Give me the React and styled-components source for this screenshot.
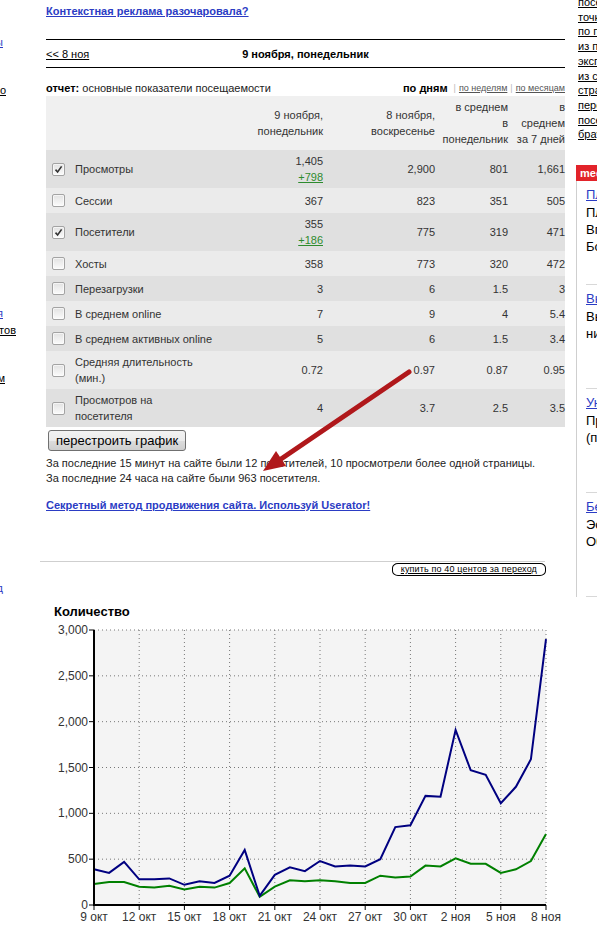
import React from "react";
import styled, { createGlobalStyle } from "styled-components";

const GlobalStyle = createGlobalStyle`
  html, body {
    margin: 0;
    padding: 0;
    background: #fff;
    overflow: hidden;
  }
  body {
    font-family: "Liberation Sans", Arial, sans-serif;
    font-size: 11px;
    color: #000;
  }
`;

const Page = styled.div`
  position: relative;
  width: 597px;
  height: 930px;
  overflow: hidden;
  display: flex;
  align-items: flex-start;
`;

/* left rail: only the tail of each link is visible */
const LeftRail = styled.div`
  flex: 0 0 20px;
  width: 20px;
  min-width: 0;
  overflow: hidden;
  margin-right: 26px;
  display: flex;
  flex-direction: column;
`;

const RailLink = styled.a`
  display: flex;
  justify-content: flex-end;
  overflow: hidden;
  white-space: nowrap;
  height: 14px;
  line-height: 14px;
  margin-top: ${p => p.$top}px;
  padding-right: ${p => p.$cut}px;
  color: ${p => (p.$blue ? "#2b3cc4" : "#000")};
  text-decoration: underline;
`;

const Main = styled.div`
  flex: 0 0 519px;
  width: 519px;
  min-width: 0;
  display: flex;
  flex-direction: column;
`;

const PromoLink = styled.a`
  align-self: flex-start;
  margin-top: ${p => p.$top}px;
  font-weight: bold;
  line-height: 14px;
  color: #2b3cc4;
  text-decoration: underline;
`;

const DayNav = styled.div`
  margin-top: 21px;
  height: 27px;
  border-top: 1px solid #000;
  border-bottom: 1px solid #000;
  display: grid;
  grid-template-columns: 1fr auto 1fr;
  align-items: center;
`;

const PrevDay = styled.a`
  justify-self: start;
  color: #000;
  text-decoration: underline;
`;

const DayTitle = styled.div`
  font-weight: bold;
`;

const ReportHead = styled.div`
  margin-top: 13px;
  height: 14px;
  line-height: 14px;
  display: flex;
  justify-content: space-between;
  align-items: center;
`;

const ReportTitle = styled.div`
  color: #222;
  b {
    color: #000;
  }
`;

const Periods = styled.div`
  display: flex;
  align-items: center;
  gap: 3px;
  font-size: 9px;
  color: #bbb;
`;

const PeriodActive = styled.span`
  font-size: 11px;
  font-weight: bold;
  color: #000;
  margin-right: 3px;
`;

const PeriodLink = styled.a`
  color: #555;
  text-decoration: underline;
`;

const Stats = styled.table`
  margin-top: 1px;
  width: 519px;
  border-collapse: collapse;
  table-layout: fixed;
  color: #333;
  font-size: 11px;
`;

const Row = styled.tr`
  height: 25px;
  background: ${p =>
    p.$tone === "head" ? "#f0f0f0" : p.$tone === "dark" ? "#e0e0e0" : "#ebebeb"};
`;

const Cell = styled.td`
  padding: 3px ${p => (p.$last ? 0 : 2)}px 3px ${p => (p.$box ? 6 : 2)}px;
  line-height: 16px;
  vertical-align: middle;
  text-align: ${p => (p.$num ? "right" : "left")};
  white-space: nowrap;
`;

const Box = styled.span`
  display: block;
  position: relative;
  width: 11px;
  height: 11px;
  border: 1px solid #a3a3a3;
  border-radius: 2px;
  background: linear-gradient(#e2e2e2, #fbfbfb);
  box-shadow: inset 0 0 0 1px rgba(255, 255, 255, 0.6);

  svg {
    position: absolute;
    left: 1px;
    top: 1px;
  }
`;

const Delta = styled.a`
  color: #2e8b2e;
  text-decoration: underline;
`;

const RebuildButton = styled.button`
  align-self: flex-start;
  margin: 3px 0 0 2px;
  height: 21px;
  padding: 0 7px;
  font: 13px "Liberation Sans", Arial, sans-serif;
  color: #000;
  border: 1px solid #707070;
  border-radius: 3px;
  background: linear-gradient(#f2f2f2 0%, #ebebeb 50%, #dddddd 51%, #cfcfcf 100%);
`;

const Info = styled.div`
  margin-top: 5px;
  line-height: 15px;
  color: #222;
`;

const Rule = styled.div`
  margin: 49px 0 0 -6px;
  width: 505px;
  border-top: 1px solid #cfcfcf;
`;

const BuyButton = styled.a`
  align-self: flex-end;
  margin: 1px 19px 0 0;
  height: 11px;
  padding: 0 8px;
  border: 1px solid #000;
  border-radius: 6px / 5px;
  font-size: 9px;
  letter-spacing: 0.15px;
  line-height: 11px;
  color: #000;
  text-decoration: underline;
  white-space: nowrap;
`;

const ChartBox = styled.div`
  margin-top: 18px;
  height: 335px;
`;

/* right rail */
const RightRail = styled.div`
  flex: 0 0 220px;
  width: 220px;
  min-width: 0;
  margin-left: 11px;
  display: flex;
  flex-direction: column;
`;

const NavList = styled.div`
  margin-top: -5px;
  padding-left: 2px;
  display: flex;
  flex-direction: column;
`;

const NavLink = styled.a`
  line-height: 14.7px;
  color: #000;
  text-decoration: underline;
  white-space: nowrap;
`;

const Badge = styled.div`
  margin-top: 23px;
  height: 16px;
  line-height: 16px;
  padding-left: 4px;
  background: #e2232a;
  color: #fff;
  font-weight: bold;
  font-size: 11px;
`;

const AdPanel = styled.div`
  border-left: 1px solid #cfcfcf;
  display: flex;
  flex-direction: column;
`;

const Ad = styled.div`
  margin-left: 9px;
  height: 104px;
  padding-top: 5px;
  box-sizing: border-box;
  border-bottom: 1px solid #d8d8d8;
  font-size: 13px;
  white-space: nowrap;
`;

const AdLink = styled.a`
  display: block;
  line-height: 18px;
  color: #2b3cc4;
  text-decoration: underline;
`;

const AdText = styled.div`
  margin-top: 1px;
  line-height: 16px;
  color: #000;
`;

const ArrowLayer = styled.svg`
  position: absolute;
  left: 0;
  top: 0;
  pointer-events: none;
`;

const rows = [
  { label: ["Просмотры"], checked: true, v: ["1,405", "2,900", "801", "1,661"], delta: "+798", tone: "dark" },
  { label: ["Сессии"], v: ["367", "823", "351", "505"], tone: "light" },
  { label: ["Посетители"], checked: true, v: ["355", "775", "319", "471"], delta: "+186", tone: "dark" },
  { label: ["Хосты"], v: ["358", "773", "320", "472"], tone: "light" },
  { label: ["Перезагрузки"], v: ["3", "6", "1.5", "3"], tone: "dark" },
  { label: ["В среднем online"], v: ["7", "9", "4", "5.4"], tone: "light" },
  { label: ["В среднем активных online"], v: ["5", "6", "1.5", "3.4"], tone: "dark" },
  { label: ["Средняя длительность", "(мин.)"], v: ["0.72", "0.97", "0.87", "0.95"], tone: "light" },
  { label: ["Просмотров на", "посетителя"], v: ["4", "3.7", "2.5", "3.5"], tone: "dark" },
];

const headers = [
  ["9 ноября,", "понедельник"],
  ["8 ноября,", "воскресенье"],
  ["в среднем", "в", "понедельник"],
  ["в", "среднем", "за 7 дней"],
];

const navLinks = [
  "посещаемость", "точки входа", "по поисковым фразам", "из поисковых систем",
  "экспорт данных", "из ссылающихся сайтов", "страницы входа", "переходы",
  "посещаемость по часам", "браузеры",
];

const ads = [
  { title: "Пластиковые окна", lines: ["Пластиковые окна от завода.", "Вгоняем цены вниз!", "Большие скидки."] },
  { title: "Выгодные кредиты", lines: ["Выдача за 1 день,", "никаких справок."] },
  { title: "Уникальные курсы", lines: ["Программирование", "(при поддержке вузов)"] },
  { title: "Бесплатный хостинг", lines: ["Эстетичный дизайн сайта.", "Обслуживание 24/7."] },
];

const views = [390, 350, 470, 280, 280, 290, 220, 260, 240, 320, 600, 100, 330, 410, 370, 480, 420, 430, 420, 500, 850, 870, 1190, 1180, 1910, 1470, 1420, 1110, 1290, 1590, 2900];
const visitors = [230, 250, 250, 200, 190, 210, 170, 200, 190, 240, 400, 90, 200, 270, 260, 270, 260, 240, 240, 320, 300, 310, 430, 420, 510, 450, 450, 350, 390, 480, 775];
const dayLabels = ["9 окт", "12 окт", "15 окт", "18 окт", "21 окт", "24 окт", "27 окт", "30 окт", "2 ноя", "5 ноя", "8 ноя"];

// chart works in page coordinates, shifted by the box origin
const X0 = 94, X1 = 546, Y0 = 906, Y1 = 631;
const dayX = d => X0 + (d * (X1 - X0)) / 30;
const valY = v => Y0 - (v * (Y0 - Y1)) / 3000;
const toPoints = data => data.map((v, i) => `${dayX(i).toFixed(1)},${valY(v).toFixed(1)}`).join(" ");

function Checkbox({ checked }) {
  return (
    <Box>
      {checked && (
        <svg width="9" height="9" viewBox="0 0 9 9">
          <path d="M1.5 4.6 L3.6 7 L7.6 1.4" fill="none" stroke="#333" strokeWidth="1.6" />
        </svg>
      )}
    </Box>
  );
}

function Chart() {
  const yTicks = [0, 500, 1000, 1500, 2000, 2500, 3000];
  const font = '"Liberation Sans", Arial, sans-serif';
  return (
    <svg width="519" height="335" viewBox="46 595 519 335">
      <text x="54" y="617" fontFamily={font} fontSize="13" fontWeight="bold" fill="#000">Количество</text>
      <rect x={X0} y={Y1} width={X1 - X0} height={Y0 - Y1} fill="#f4f4f4" />
      {yTicks.slice(1).map(t => (
        <line key={t} x1={X0} x2={X1} y1={valY(t)} y2={valY(t)} stroke="#777" strokeDasharray="1 3" />
      ))}
      {dayLabels.map((_, i) => i > 0 && (
        <line key={i} x1={dayX(i * 3)} x2={dayX(i * 3)} y1={Y1} y2={Y0} stroke="#777" strokeDasharray="1 3" />
      ))}
      <polyline points={toPoints(visitors)} fill="none" stroke="#008000" strokeWidth="2" />
      <polyline points={toPoints(views)} fill="none" stroke="#000080" strokeWidth="2" />
      <line x1={X0} x2={X0} y1={Y1} y2={Y0 + 1} stroke="#000" strokeWidth="2" />
      <line x1={X0 - 1} x2={X1} y1={Y0} y2={Y0} stroke="#000" strokeWidth="2" />
      {yTicks.map(t => (
        <g key={t}>
          <line x1={X0 - 5} x2={X0} y1={valY(t)} y2={valY(t)} stroke="#000" />
          <text x={X0 - 6} y={valY(t) + 4} textAnchor="end" fontFamily={font} fontSize="12" fill="#333">
            {t.toLocaleString("en-US")}
          </text>
        </g>
      ))}
      {dayLabels.map((l, i) => (
        <g key={l}>
          <line x1={dayX(i * 3)} x2={dayX(i * 3)} y1={Y0} y2={Y0 + 5} stroke="#000" />
          <text x={dayX(i * 3)} y="922" textAnchor="middle" fontFamily={font} fontSize="12" fill="#333">{l}</text>
        </g>
      ))}
    </svg>
  );
}

export default function App() {
  return (
    <>
      <GlobalStyle />
      <Page>
        <LeftRail>
          <RailLink $top={35} $cut={17} $blue>все сайты</RailLink>
          <RailLink $top={34} $cut={14}>подробно</RailLink>
          <RailLink $top={209} $cut={17} $blue>обсуждения</RailLink>
          <RailLink $top={3} $cut={4}>Каталог сайтов</RailLink>
          <RailLink $top={34} $cut={15}>по регионам</RailLink>
          <RailLink $top={196} $cut={17} $blue>вход</RailLink>
        </LeftRail>

        <Main>
          <PromoLink $top={4}>Контекстная реклама разочаровала?</PromoLink>

          <DayNav>
            <PrevDay>&lt;&lt; 8 ноя</PrevDay>
            <DayTitle>9 ноября, понедельник</DayTitle>
            <span />
          </DayNav>

          <ReportHead>
            <ReportTitle><b>отчет:</b> основные показатели посещаемости</ReportTitle>
            <Periods>
              <PeriodActive>по дням</PeriodActive>|
              <PeriodLink>по неделям</PeriodLink>|
              <PeriodLink>по месяцам</PeriodLink>
            </Periods>
          </ReportHead>

          <Stats>
            <colgroup>
              <col style={{ width: 27 }} />
              <col style={{ width: 166 }} />
              <col style={{ width: 86 }} />
              <col style={{ width: 112 }} />
              <col style={{ width: 73 }} />
              <col style={{ width: 55 }} />
            </colgroup>
            <tbody>
              <Row $tone="head">
                <Cell $box />
                <Cell />
                {headers.map((h, i) => (
                  <Cell key={i} $num $last={i === 3}>
                    {h.map((line, j) => (
                      <React.Fragment key={j}>{j > 0 && <br />}{line}</React.Fragment>
                    ))}
                  </Cell>
                ))}
              </Row>
              {rows.map(r => (
                <Row key={r.label[0]} $tone={r.tone}>
                  <Cell $box><Checkbox checked={r.checked} /></Cell>
                  <Cell>
                    {r.label.map((line, j) => (
                      <React.Fragment key={j}>{j > 0 && <br />}{line}</React.Fragment>
                    ))}
                  </Cell>
                  {r.v.map((v, i) => (
                    <Cell key={i} $num $last={i === 3}>
                      {v}
                      {i === 0 && r.delta && (<><br /><Delta>{r.delta}</Delta></>)}
                    </Cell>
                  ))}
                </Row>
              ))}
            </tbody>
          </Stats>

          <RebuildButton>перестроить график</RebuildButton>

          <Info>
            За последние 15 минут на сайте были 12 посетителей, 10 просмотрели более одной страницы.<br />
            За последние 24 часа на сайте были 963 посетителя.
          </Info>

          <PromoLink $top={12}>Секретный метод продвижения сайта. Используй Userator!</PromoLink>

          <Rule />
          <BuyButton>купить по 40 центов за переход</BuyButton>

          <ChartBox>
            <Chart />
          </ChartBox>
        </Main>

        <RightRail>
          <NavList>
            {navLinks.map(l => <NavLink key={l}>{l}</NavLink>)}
          </NavList>
          <Badge>media</Badge>
          <AdPanel>
            {ads.map(a => (
              <Ad key={a.title}>
                <AdLink>{a.title}</AdLink>
                {a.lines.map(t => <AdText key={t}>{t}</AdText>)}
              </Ad>
            ))}
          </AdPanel>
        </RightRail>

        <ArrowLayer width="597" height="930">
          <line x1="409" y1="372" x2="281" y2="459" stroke="#b0181b" strokeWidth="5" strokeLinecap="round" />
          <polygon points="263,471 286,466 276,451" fill="#b0181b" />
        </ArrowLayer>
      </Page>
    </>
  );
}
